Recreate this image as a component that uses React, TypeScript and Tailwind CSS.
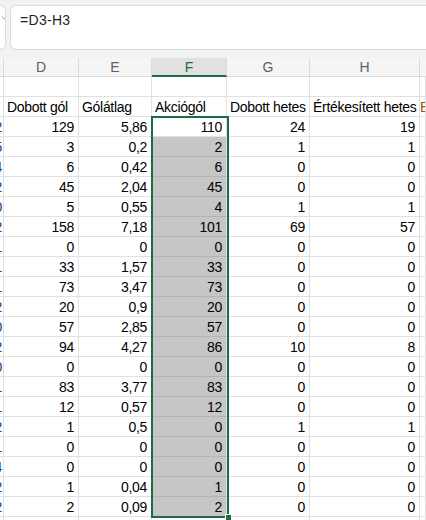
import React from "react";

const rows: string[][] = [
  ["129", "5,86", "110", "24", "19"],
  ["3", "0,2", "2", "1", "1"],
  ["6", "0,42", "6", "0", "0"],
  ["45", "2,04", "45", "0", "0"],
  ["5", "0,55", "4", "1", "1"],
  ["158", "7,18", "101", "69", "57"],
  ["0", "0", "0", "0", "0"],
  ["33", "1,57", "33", "0", "0"],
  ["73", "3,47", "73", "0", "0"],
  ["20", "0,9", "20", "0", "0"],
  ["57", "2,85", "57", "0", "0"],
  ["94", "4,27", "86", "10", "8"],
  ["0", "0", "0", "0", "0"],
  ["83", "3,77", "83", "0", "0"],
  ["12", "0,57", "12", "0", "0"],
  ["1", "0,5", "0", "1", "1"],
  ["0", "0", "0", "0", "0"],
  ["0", "0", "0", "0", "0"],
  ["1", "0,04", "1", "0", "0"],
  ["2", "0,09", "2", "0", "0"],
];

const cEdge = ["2", "5", "4", "2", "0", "2", "1", "1", "1", "2", "0", "2", "0", "1", "1", "2", "1", "4", "2", "2"];

const cell = "h-[20px] border-r border-b border-[#e1e1e1] flex items-center pt-[2px] overflow-hidden whitespace-nowrap";
const hdr = "h-[19px] bg-[#f5f5f5] border-r border-b border-[#dadada] flex items-center justify-center text-[14px] text-[#5f5f5f] tracking-normal";

export default function App() {
  return (
    <div
      className="w-[426px] h-[520px] overflow-hidden bg-white text-black"
      style={{ fontFamily: '"Liberation Sans", Arial, sans-serif' }}
    >
      {/* formula bar */}
      <div className="h-[58px] bg-[#f0f2f4] flex gap-[4px] pt-[5px] pb-[8px] overflow-hidden">
        <div className="w-[6px] shrink-0 bg-white rounded-r-[6px] border border-l-0 border-[#dcdcdc] flex items-start pt-[8px] justify-end overflow-hidden">
          <svg width="8" height="8" viewBox="0 0 8 8" className="shrink-0 -mr-[4px]">
            <path d="M1 2.5 L4 5.5 L7 2.5" fill="none" stroke="#8a8a8a" strokeWidth="1" />
          </svg>
        </div>
        <div className="flex-1 bg-white rounded-l-[6px] border border-r-0 border-[#dcdcdc] pl-[9px] pt-[2px] -mr-[20px]">
          <span className="text-[14px] text-[#1f1f1f] tracking-[0.3px]">=D3-H3</span>
        </div>
      </div>

      {/* grid */}
      <div className="relative">
        <div className="grid grid-cols-[4px_75px_73px_75px_83px_110px_1fr] text-[14px] tracking-[-0.3px]">
          {/* column headers */}
          <div className="h-[19px] bg-[#f5f5f5] border-r border-b border-[#dadada]" />
          <div className={hdr}>D</div>
          <div className={hdr}>E</div>
          <div className="h-[19px] bg-[#e1e1e1] border-r border-[#dadada] border-b-2 border-b-[#1e6b41] flex items-center justify-center text-[14px] text-[#1e6b41] pt-[1px]">
            F
          </div>
          <div className={hdr}>G</div>
          <div className={hdr}>H</div>
          <div className="h-[19px] bg-[#f5f5f5] border-b border-[#dadada]" />

          {/* row 1 */}
          {Array.from({ length: 7 }).map((_, i) => (
            <div key={"r1" + i} className={cell} />
          ))}

          {/* row 2: labels */}
          <div className={cell} />
          <div className={cell + " pl-[3px]"}>Dobott gól</div>
          <div className={cell + " pl-[3px]"}>Gólátlag</div>
          <div className={cell + " pl-[3px]"}>Akciógól</div>
          <div className={cell + " pl-[3px]"}>Dobott hetes</div>
          <div className={cell + " pl-[3px]"}>Értékesített hetes</div>
          <div className={cell + " pl-0 text-[#8a5a12]"}>Büntetés</div>

          {/* data rows */}
          {rows.map((r, ri) => (
            <React.Fragment key={"row" + ri}>
              <div className={cell + " justify-end pr-[1px] text-[#1f3f6e]"}>{cEdge[ri]}</div>
              <div className={cell + " justify-end pr-[4px]"}>{r[0]}</div>
              <div className={cell + " justify-end pr-[4px]"}>{r[1]}</div>
              <div className={cell + " justify-end pr-[4px] " + (ri === 0 ? "bg-white" : "bg-[#c6c6c6] border-b-[#b4b4b4]")}>{r[2]}</div>
              <div className={cell + " justify-end pr-[4px]"}>{r[3]}</div>
              <div className={cell + " justify-end pr-[4px]"}>{r[4]}</div>
              <div className={cell} />
            </React.Fragment>
          ))}

          {/* partial row 23 */}
          {Array.from({ length: 7 }).map((_, i) => (
            <div key={"r23" + i} className={cell} />
          ))}
        </div>

        {/* selection outline */}
        <div className="absolute left-[151px] top-[58px] w-[78px] h-[402px] border-2 border-[#1e6b41] pointer-events-none" />
        <div className="absolute left-[225px] top-[456px] w-[7px] h-[7px] bg-[#1e6b41] border border-white pointer-events-none" />
      </div>
    </div>
  );
}
